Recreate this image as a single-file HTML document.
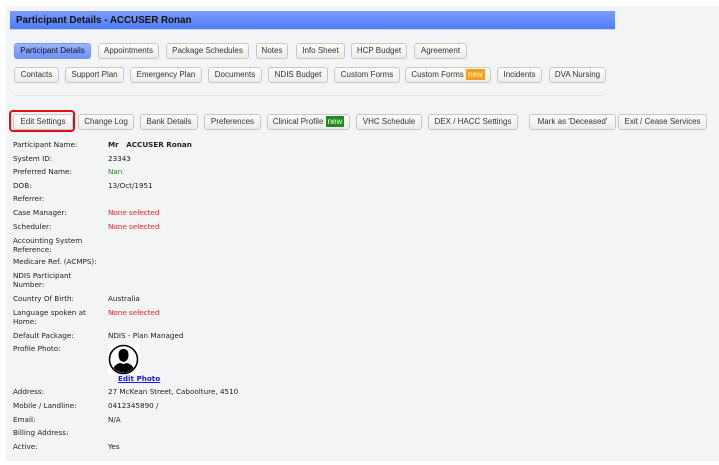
<!DOCTYPE html>
<html><head><style>
body{margin:0;width:719px;height:465px;background:#fff;overflow:hidden;position:relative;font-family:"Liberation Sans",Arial,sans-serif}
#panel{position:absolute;left:6px;top:6px;width:713px;height:455px;background:#f3f4f6}
#title{position:absolute;left:10px;top:11px;width:605px;height:19px;background:linear-gradient(#7a9cff,#4f7df7);border-bottom:1px solid #c8d4f8;font-weight:bold;font-size:9.8px;line-height:19px;color:#111;padding-left:6px;box-sizing:border-box}
.b{position:absolute;height:16px;box-sizing:border-box;border:1px solid #c9c9c4;border-radius:3px;background:linear-gradient(#fdfdfb,#ececea);font-size:8px;line-height:14px;text-align:center;color:#333;white-space:nowrap}
.act{background:linear-gradient(#9db5ff,#6d8ef5);border-color:#7c98ee;color:#111}
.new{display:inline-block;color:#fff;padding:0 2px;line-height:11px}
.sep{position:absolute;left:14px;top:95px;width:590px;height:1px;background:#e6e7ea}
.r{position:absolute;font-family:"DejaVu Sans",sans-serif;font-size:7.2px;color:#222;line-height:9px}
.red{color:#f0232a}
</style></head><body>
<div id="panel"></div>
<div id="title">Participant Details - ACCUSER Ronan</div>

<div class="b act" style="left:14px;top:43px;width:77px">Participant Details</div>
<div class="b" style="left:98px;top:43px;width:61px">Appointments</div>
<div class="b" style="left:166px;top:43px;width:83px">Package Schedules</div>
<div class="b" style="left:256px;top:43px;width:32px">Notes</div>
<div class="b" style="left:296px;top:43px;width:49px">Info Sheet</div>
<div class="b" style="left:351px;top:43px;width:56px">HCP Budget</div>
<div class="b" style="left:414px;top:43px;width:53px">Agreement</div>

<div class="b" style="left:14px;top:67px;width:45px">Contacts</div>
<div class="b" style="left:65px;top:67px;width:59px">Support Plan</div>
<div class="b" style="left:130px;top:67px;width:72px">Emergency Plan</div>
<div class="b" style="left:208px;top:67px;width:54px">Documents</div>
<div class="b" style="left:268px;top:67px;width:60px">NDIS Budget</div>
<div class="b" style="left:334px;top:67px;width:66px">Custom Forms</div>
<div class="b" style="left:405px;top:67px;width:86px">Custom Forms <span class="new" style="background:#f5a020">new</span></div>
<div class="b" style="left:497px;top:67px;width:45px">Incidents</div>
<div class="b" style="left:549px;top:67px;width:57px">DVA Nursing</div>

<div class="sep"></div>

<div style="position:absolute;left:9px;top:110px;width:66px;height:22px;border:2px solid #e0101a;border-radius:4px;box-sizing:border-box"></div>
<div class="b" style="left:13px;top:114px;width:60px">Edit Settings</div>
<div class="b" style="left:78px;top:114px;width:56px">Change Log</div>
<div class="b" style="left:140px;top:114px;width:58px">Bank Details</div>
<div class="b" style="left:204px;top:114px;width:57px">Preferences</div>
<div class="b" style="left:267px;top:114px;width:83px">Clinical Profile <span class="new" style="background:#1f8a1f">new</span></div>
<div class="b" style="left:356px;top:114px;width:66px">VHC Schedule</div>
<div class="b" style="left:428px;top:114px;width:90px">DEX / HACC Settings</div>
<div class="b" style="left:529px;top:114px;width:87px">Mark as 'Deceased'</div>
<div class="b" style="left:618px;top:114px;width:89px">Exit / Cease Services</div>

<div class="r" style="left:13px;top:140px">Participant Name:</div><div class="r" style="left:108px;top:140px;font-weight:bold">Mr&nbsp;&nbsp; ACCUSER Ronan</div>
<div class="r" style="left:13px;top:154px">System ID:</div><div class="r" style="left:108px;top:154px">23343</div>
<div class="r" style="left:13px;top:167px">Preferred Name:</div><div class="r" style="left:108px;top:167px;color:#2e8b2e">Nan</div>
<div class="r" style="left:13px;top:181px">DOB:</div><div class="r" style="left:108px;top:181px">13/Oct/1951</div>
<div class="r" style="left:13px;top:194px">Referrer:</div>
<div class="r" style="left:13px;top:208px">Case Manager:</div><div class="r red" style="left:108px;top:208px">None selected</div>
<div class="r" style="left:13px;top:222px">Scheduler:</div><div class="r red" style="left:108px;top:222px">None selected</div>
<div class="r" style="left:13px;top:236px">Accounting System<br>Reference:</div>
<div class="r" style="left:13px;top:257px">Medicare Ref. (ACMPS):</div>
<div class="r" style="left:13px;top:271px">NDIS Participant<br>Number:</div>
<div class="r" style="left:13px;top:294px">Country Of Birth:</div><div class="r" style="left:108px;top:294px">Australia</div>
<div class="r" style="left:13px;top:308px">Language spoken at<br>Home:</div><div class="r red" style="left:108px;top:308px">None selected</div>
<div class="r" style="left:13px;top:331px">Default Package:</div><div class="r" style="left:108px;top:331px">NDIS - Plan Managed</div>
<div class="r" style="left:13px;top:344px">Profile Photo:</div>
<svg style="position:absolute;left:108px;top:344px" width="31" height="31" viewBox="0 0 31 31"><rect width="31" height="31" fill="#fff"/><circle cx="15.5" cy="15.5" r="14" fill="#fff" stroke="#000" stroke-width="1.6"/><clipPath id="c"><circle cx="15.5" cy="15.5" r="13"/></clipPath><g clip-path="url(#c)"><path d="M10.5 11 Q10.5 5 15.5 5 Q20.5 5 20.5 11 Q20.5 17 15.5 18 Q10.5 17 10.5 11Z" fill="#000"/><path d="M4 31 Q4 21 12 19 L15.5 20 L19 19 Q27 21 27 31Z" fill="#000"/></g></svg>
<div class="r" style="left:118px;top:374px;color:#1a1aee;font-weight:bold;text-decoration:underline">Edit Photo</div>
<div class="r" style="left:13px;top:387px">Address:</div><div class="r" style="left:108px;top:387px">27 McKean Street, Caboolture, 4510</div>
<div class="r" style="left:13px;top:401px">Mobile / Landline:</div><div class="r" style="left:108px;top:401px">0412345890 /</div>
<div class="r" style="left:13px;top:415px">Email:</div><div class="r" style="left:108px;top:415px">N/A</div>
<div class="r" style="left:13px;top:428px">Billing Address:</div>
<div class="r" style="left:13px;top:442px">Active:</div><div class="r" style="left:108px;top:442px">Yes</div>
</body></html>
